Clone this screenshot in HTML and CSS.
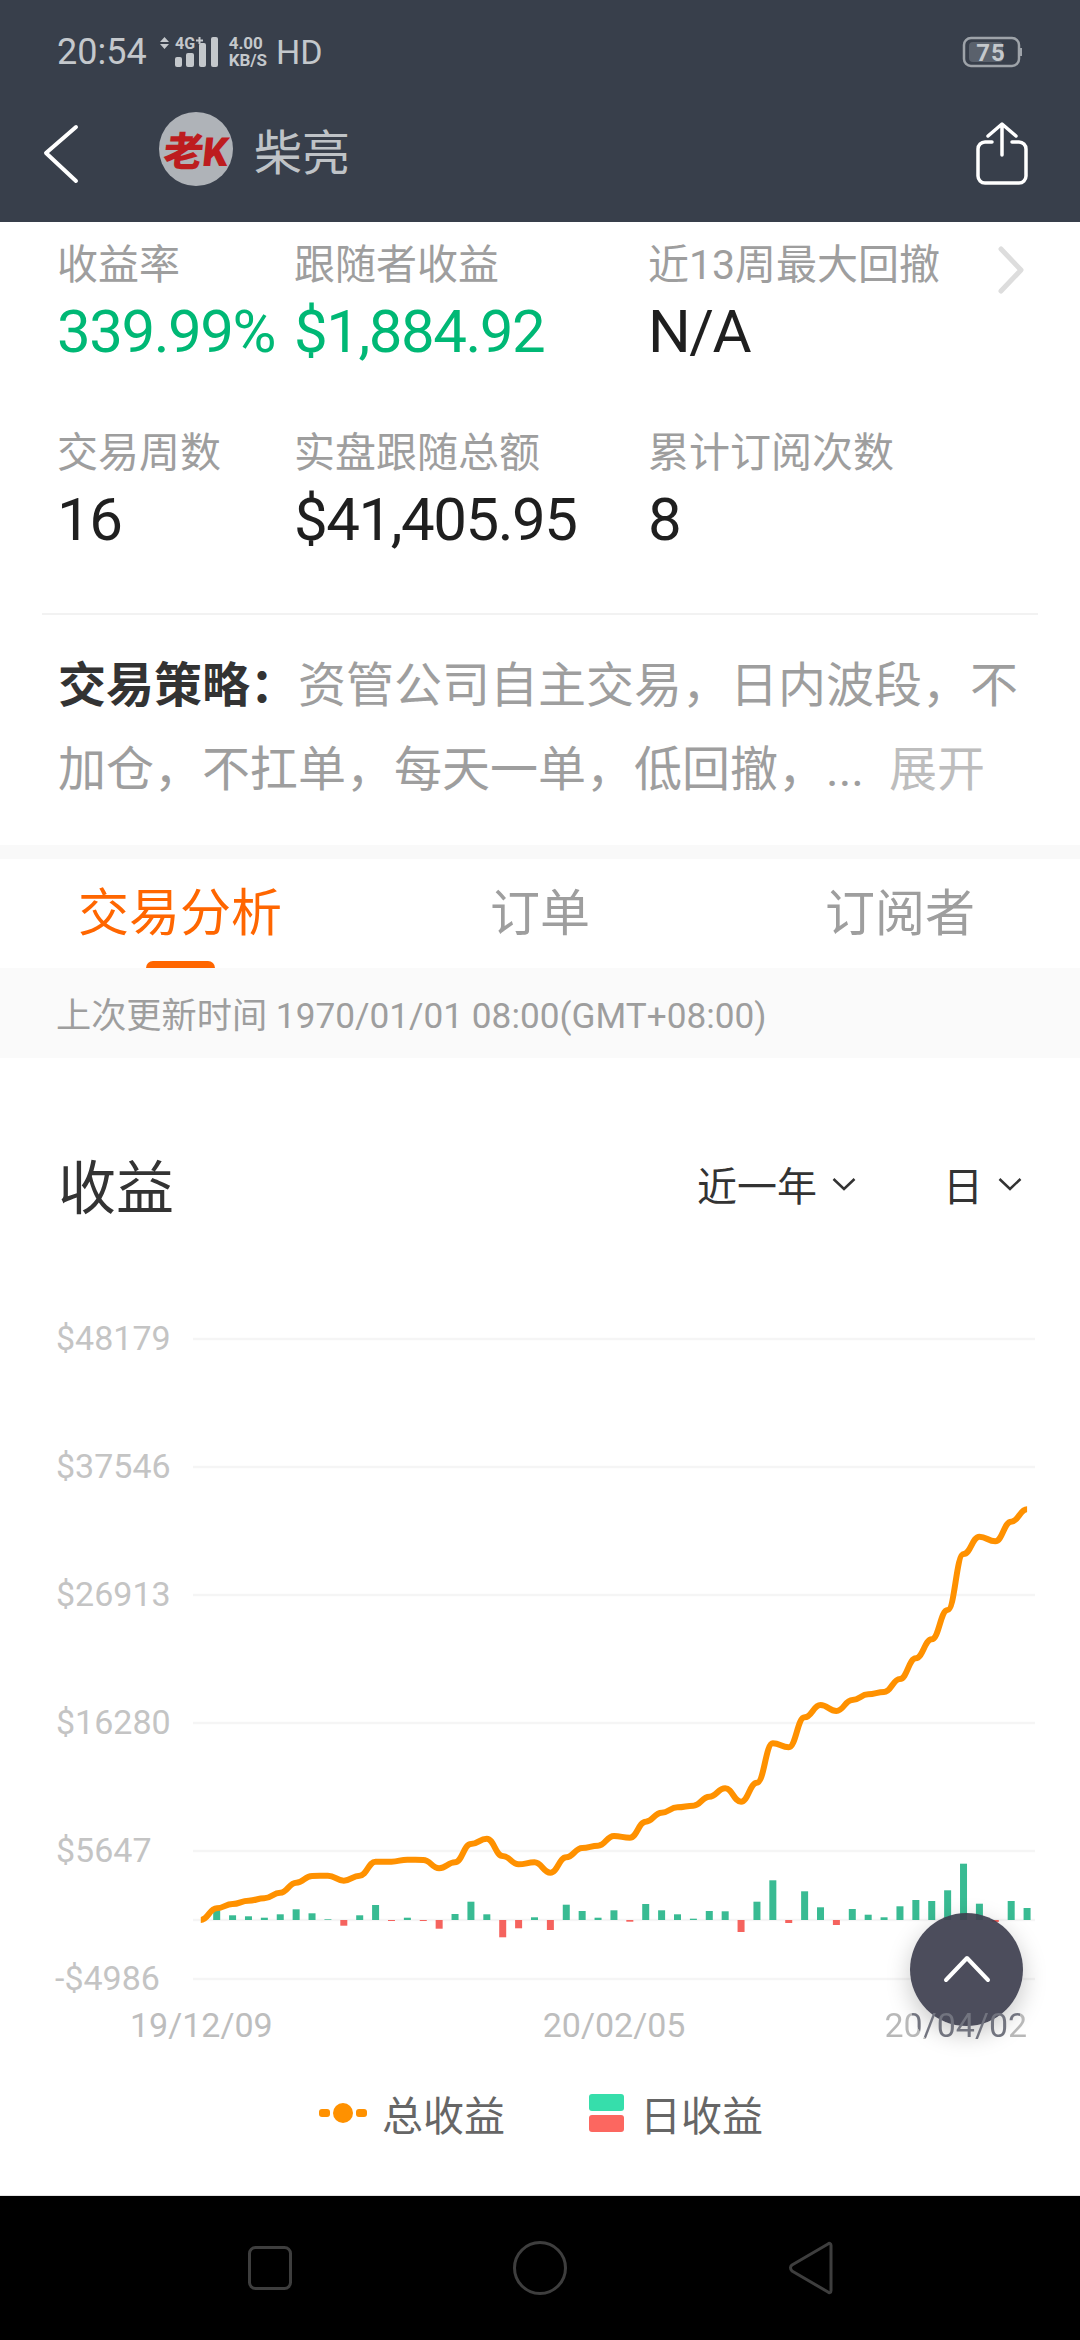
FILE: index.html
```html
<!DOCTYPE html>
<html lang="zh-CN">
<head>
      <meta charset="UTF-8">
      <meta name="viewport" content="width=device-width, initial-scale=1.0">
      <title>柴亮</title>
      <link rel="stylesheet" href="styles.css">
</head>
<body>
      <header class="topbar">
            <div class="status">
                  <span class="status-time">20:54</span>
                  <svg class="status-signal" width="60" height="40" viewBox="160 32 60 40">
                        <path d="M165.500 37l4.500 5h-9zM165.500 49l4.500-5h-9z" fill="#c4c8cc"/>
                        <text x="176" y="49" class="signal-text">4G</text>
                        <path d="M197 40.500h7M200.500 37v7" stroke="#c4c8cc" stroke-width="2"/>
                        <rect x="176" y="57" width="7" height="10" rx="2" fill="#c4c8cc"/>
                        <rect x="187" y="53" width="8" height="14" rx="2" fill="#c4c8cc"/>
                        <rect x="200" y="43" width="7" height="24" rx="2" fill="#c4c8cc"/>
                        <rect x="212" y="37" width="7" height="30" rx="2" fill="#c4c8cc"/>
                  </svg>
                  <span class="status-speed"><b>4.00</b><b>KB/S</b></span>
                  <span class="status-hd">HD</span>
                  <svg class="status-battery" width="60" height="32" viewBox="962 36 60 32">
                        <rect x="964" y="38" width="55" height="28" rx="7" fill="none" stroke="#9ea3a9" stroke-width="2.500"/>
                        <rect x="969" y="42" width="34" height="20" rx="4" fill="#5a616c"/>
                        <path d="M1020 48h1a2 2 0 0 1 0 8h-1z" fill="#9ea3a9"/>
                        <text x="991" y="61" text-anchor="middle" class="battery-text">75</text>
                  </svg>
            </div>
            <nav class="nav">
                  <svg class="nav-back" width="42" height="90" viewBox="0 0 42 90">
                        <path d="M36 23L6 49l30 28" fill="none" stroke="#fff" stroke-width="4" stroke-linecap="round" stroke-linejoin="round"/>
                  </svg>
                  <div class="avatar"><span>老K</span></div>
                  <h1 class="nav-name">柴亮</h1>
                  <svg class="nav-share" width="52" height="90" viewBox="0 0 52 90">
                        <path d="M16 38H9a7 7 0 0 0-7 7v27a7 7 0 0 0 7 7h34a7 7 0 0 0 7-7V45a7 7 0 0 0-7-7h-7M26 51V21M12 32l14-12 14 12" fill="none" stroke="#fff" stroke-width="3.500" stroke-linecap="round" stroke-linejoin="round"/>
                  </svg>
            </nav>
      </header>

      <main class="page">
            <section class="stats">
                  <div class="stat">
                        <span class="stat-label">收益率</span>
                        <strong class="stat-value up">339.99%</strong>
                  </div>
                  <div class="stat">
                        <span class="stat-label">跟随者收益</span>
                        <strong class="stat-value up">$1,884.92</strong>
                  </div>
                  <div class="stat">
                        <span class="stat-label">近13周最大回撤</span>
                        <strong class="stat-value">N/A</strong>
                  </div>
                  <div class="stat">
                        <span class="stat-label">交易周数</span>
                        <strong class="stat-value">16</strong>
                  </div>
                  <div class="stat">
                        <span class="stat-label">实盘跟随总额</span>
                        <strong class="stat-value">$41,405.95</strong>
                  </div>
                  <div class="stat">
                        <span class="stat-label">累计订阅次数</span>
                        <strong class="stat-value">8</strong>
                  </div>
                  <svg class="stats-more" width="30" height="50" viewBox="0 0 30 50">
                        <path d="M4 4l20 21L4 46" fill="none" stroke="#ddd" stroke-width="5" stroke-linecap="round" stroke-linejoin="round"/>
                  </svg>
            </section>

            <p class="strategy"><b>交易策略：</b>资管公司自主交易，日内波段，不加仓，不扛单，每天一单，低回撤，...<a class="strategy-more">展开</a></p>

            <div class="tabs">
                  <div class="tab active">交易分析</div>
                  <div class="tab">订单</div>
                  <div class="tab">订阅者</div>
            </div>
            <div class="updated">上次更新时间 1970/01/01 08:00(GMT+08:00)</div>

            <div class="chart-head">
                  <h2 class="chart-title">收益</h2>
                  <div class="picker picker-range">近一年
                        <svg width="24" height="14" viewBox="0 0 24 14"><path d="M1.500 2l10.500 10L22.500 2" fill="none" stroke="#333" stroke-width="2.500"/></svg>
                  </div>
                  <div class="picker">日
                        <svg width="24" height="14" viewBox="0 0 24 14"><path d="M1.500 2l10.500 10L22.500 2" fill="none" stroke="#333" stroke-width="2.500"/></svg>
                  </div>
            </div>

            <svg class="chart" id="chart" width="1080" height="774" viewBox="0 1226 1080 774">
                  <g class="chart-labels">
                        <text x="56" y="1350">$48179</text>
                        <text x="56" y="1478">$37546</text>
                        <text x="56" y="1606">$26913</text>
                        <text x="56" y="1734">$16280</text>
                        <text x="56" y="1862">$5647</text>
                        <text x="55" y="1990">-$4986</text>
                  </g>
            </svg>

            <div class="axis">
                  <span>19/12/09</span>
                  <span>20/02/05</span>
                  <span class="axis-last">20/04/02</span>
            </div>

            <div class="legend">
                  <div class="legend-item">
                        <svg width="48" height="20" viewBox="0 0 48 20">
                              <rect y="6" width="11" height="8" rx="3" fill="#ff9100"/>
                              <rect x="37" y="6" width="11" height="8" rx="3" fill="#ff9100"/>
                              <circle cx="24" cy="10" r="10" fill="#ff9100"/>
                        </svg>
                        总收益
                  </div>
                  <div class="legend-item legend-daily">
                        <span class="legend-bars"><i class="bar-up"></i><i class="bar-down"></i></span>
                        日收益
                  </div>
            </div>

            <button class="to-top">
                  <svg width="48" height="28" viewBox="0 0 48 28"><path d="M3 25L24 3l21 22" fill="none" stroke="#fff" stroke-width="4" stroke-linecap="round" stroke-linejoin="round"/></svg>
            </button>
      </main>

      <footer class="sysnav">
            <svg width="44" height="44" viewBox="0 0 44 44"><rect x="1.500" y="1.500" width="41" height="41" rx="6" fill="none" stroke="#3e3e3e" stroke-width="3"/></svg>
            <svg width="54" height="54" viewBox="0 0 54 54"><circle cx="27" cy="27" r="25.500" fill="none" stroke="#3e3e3e" stroke-width="3"/></svg>
            <svg width="46" height="54" viewBox="0 0 46 54"><path d="M43 4.500c0-2-1.500-3-3-1.500L4 24c-2 1.500-2 4 0 6l36 21c1.500 1.500 3 .5 3-1.500z" fill="none" stroke="#3e3e3e" stroke-width="3" stroke-linejoin="round"/></svg>
      </footer>

      <script src="chart.js"></script>
</body>
</html>
```

FILE: styles.css
```css
html{
      box-sizing: border-box;
}
*, *:after, *:before{
      box-sizing: inherit;
}
body{
      display: flex;
      flex-direction: column;
      margin: 0;
      width: 1080px;
      height: 2340px;
      overflow: hidden;
      background-color: #fff;
      font-family: Roboto, "Noto Sans CJK SC", sans-serif;
}
h1, h2, p{
      margin: 0;
      font-weight: 400;
}
.topbar{
      height: 222px;
      background-color: #383f4b;
}
.status{
      display: flex;
      align-items: center;
      height: 104px;
      padding: 0 58px 0 57px;
      color: #c4c8cc;
}
.status-time{
      font-size: 36px;
}
.status-signal{
      margin-left: 12px;
}
.signal-text{
      fill: #c4c8cc;
      font-size: 16px;
      font-weight: 700;
}
.status-speed{
      display: flex;
      flex-direction: column;
      margin-left: 10px;
      font-size: 17px;
      line-height: 17px;
}
.status-hd{
      margin-left: 9px;
      font-size: 34px;
}
.status-battery{
      margin-left: auto;
}
.battery-text{
      fill: #c4c8cc;
      font-size: 24px;
      font-weight: 700;
      letter-spacing: 1px;
}
.nav{
      display: flex;
      align-items: center;
      height: 90px;
      padding: 0 52px 0 40px;
}
.avatar{
      display: flex;
      align-items: center;
      justify-content: center;
      width: 74px;
      height: 74px;
      margin-left: 77px;
      border-radius: 50%;
      background-color: #afb3b8;
      color: #bd1c1f;
      font-size: 40px;
      font-weight: 900;
      letter-spacing: -1px;
}
.avatar span{
      transform: skewX(-6deg);
}
.nav-name{
      margin-left: 21px;
      color: #bfc3c7;
      font-size: 48px;
}
.nav-share{
      margin-left: auto;
}
.page{
      position: relative;
      flex: 1;
}
.stats{
      position: relative;
      display: grid;
      grid-template-columns: 237px 354px 1fr;
      grid-auto-rows: 188px;
      height: 393px;
      margin: 0 42px;
      padding: 13px 0 0 15px;
      border-bottom: 2px solid #f2f2f2;
}
.stat{
      display: flex;
      flex-direction: column;
      white-space: nowrap;
}
.stat-label{
      color: #9e9e9e;
      font-size: 41px;
      line-height: 60px;
}
.stat-value{
      margin-top: 1px;
      color: #1f1f1f;
      font-size: 60px;
      font-weight: 400;
      line-height: 72px;
      letter-spacing: -1.500px;
}
.up{
      color: #00b875;
}
.stats-more{
      position: absolute;
      top: 23px;
      right: 11px;
}
.strategy{
      height: 230px;
      padding: 29px 58px 0;
      color: #9e9e9e;
      font-size: 48px;
      line-height: 84px;
}
.strategy b{
      color: #333;
}
.strategy-more{
      margin-left: 25px;
      color: #bdbdbd;
}
.tabs{
      display: grid;
      grid-template-columns: repeat(3, 1fr);
      height: 123px;
      border-top: 14px solid #f9f9f9;
}
.tab{
      padding-top: 25px;
      color: #9e9e9e;
      font-size: 50px;
      line-height: 60px;
      text-align: center;
}
.tab.active{
      color: #f60;
      font-size: 51px;
}
.tab.active:after{
      content: "";
      display: block;
      width: 69px;
      height: 7px;
      margin: 17px auto 0;
      border-radius: 7px 7px 0 0;
      background-color: #f60;
}
.updated{
      height: 90px;
      padding: 3px 0 0 56px;
      background-color: #fafafa;
      color: #9e9e9e;
      font-size: 35.200px;
      line-height: 90px;
}
.chart-head{
      display: flex;
      align-items: center;
      height: 80px;
      margin: 86px 0 2px;
      padding: 0 58px 0 58px;
      color: #333;
}
.chart-title{
      font-size: 58px;
}
.picker{
      display: flex;
      align-items: center;
      gap: 15px;
      margin-left: 87px;
      font-size: 40px;
}
.picker-range{
      margin-left: auto;
}
.chart{
      display: block;
}
.chart-labels{
      fill: #c4c4c4;
      font-size: 34px;
}
.grid-line{
      stroke: #f5f5f5;
      stroke-width: 2.500;
}
.bar-pos{
      fill: #39bb93;
}
.bar-neg{
      fill: #f5635e;
}
.total-line{
      fill: none;
      stroke: #ff9100;
      stroke-width: 6;
}
.axis{
      position: relative;
      z-index: 2;
      display: flex;
      height: 50px;
      padding-left: 130px;
      color: #bdbdbd;
      font-size: 34px;
      line-height: 50px;
}
.axis span:nth-child(2){
      margin-left: 270px;
}
.axis-last{
      margin-left: 199px;
      background: radial-gradient(circle 56.500px at 82px -1px, #72747f 99%, #b8b8b8 100%);
      -webkit-background-clip: text;
      background-clip: text;
      color: transparent;
}
.legend{
      display: flex;
      height: 50px;
      margin-top: 38px;
      padding-left: 319px;
      color: #666;
      font-size: 41px;
}
.legend-item{
      display: flex;
      align-items: center;
      gap: 15px;
}
.legend-daily{
      gap: 16px;
      margin-left: 84px;
}
.legend-bars{
      display: flex;
      flex-direction: column;
      gap: 4px;
}
.legend-bars i{
      display: block;
      width: 35px;
      height: 17px;
      border-radius: 3px;
}
.bar-up{
      background-color: #36deab;
}
.bar-down{
      background-color: #fc6760;
}
.to-top{
      position: absolute;
      top: 1691px;
      left: 910px;
      width: 113px;
      height: 113px;
      padding: 0;
      border: 0;
      border-radius: 50%;
      background-color: rgba(62, 64, 80, .93);
      box-shadow: 0 8px 24px rgba(0, 0, 0, .22);
}
.to-top svg{
      display: block;
      margin: 0 auto;
      transform: translateY(-1px);
}
.sysnav{
      display: flex;
      align-items: center;
      gap: 221px;
      height: 145px;
      padding-left: 248px;
      border-top: 1px solid #e5e5e5;
      background-color: #000;
}
```

FILE: chart.js
```js
const chart = document.getElementById("chart"),
gridY = [1339, 1467, 1595, 1723, 1851, 1979],
zeroY = 1920,
firstX = 200.8,
step = 15.89,
totals = [1920, 1908.3, 1904, 1900.7, 1898.3, 1892.7, 1882.7, 1876, 1875.7, 1880.7, 1875.7, 1861.7, 1861.7, 1859.7, 1860, 1868.3, 1862.3, 1844, 1838.7, 1856, 1864.3, 1862.3, 1872.7, 1857.3, 1848, 1845.7, 1836, 1837.7, 1821.7, 1812.7, 1807.3, 1805.7, 1796.7, 1788.3, 1801.7, 1782.7, 1743.3, 1747.3, 1717.3, 1705, 1711, 1700, 1694.3, 1692, 1679, 1658.3, 1639.3, 1610, 1554, 1536.7, 1541.3, 1521.7, 1509.3],
daily = [10, 4.7, 3.7, 2.3, 5.7, 10.7, 6.7, .7, -5.7, 4.7, 15, -1, 2.3, -1, -8.7, 6, 18.3, 5.7, -17.3, -8.3, 2.7, -10, 15.3, 9, 2.3, 9.7, -1.7, 16, 9.7, 5.7, 1.3, 9, 8.7, -12, 18.3, 39.7, -3, 28.7, 12.7, -5, 11, 5.3, 2.7, 13.7, 20, 19, 29.7, 56.3, 16.3, -2, 19, 12];

function add(tag, attrs) {
      const el = document.createElementNS("http://www.w3.org/2000/svg", tag);
      for (const key in attrs) el.setAttribute(key, attrs[key]);
      chart.appendChild(el);
}

gridY.concat(zeroY).forEach(y => {
      add("line", {class: "grid-line", x1: 193, x2: 1035, y1: y, y2: y});
});

daily.forEach((value, i) => {
      add("rect", {
            class: value < 0 ? "bar-neg" : "bar-pos",
            x: firstX + (i + 1) * step - 3.5,
            y: value < 0 ? zeroY : zeroY - value,
            width: 7,
            height: Math.abs(value)
      });
});

let d = `M${firstX} ${totals[0]}`;
totals.forEach((y, i) => {
      if (i == 0) return;
      const x = firstX + i * step;
      d += `C${x - step * .55} ${totals[i - 1]} ${x - step * .45} ${y} ${x} ${y}`;
});
add("path", {class: "total-line", d: d});
```
